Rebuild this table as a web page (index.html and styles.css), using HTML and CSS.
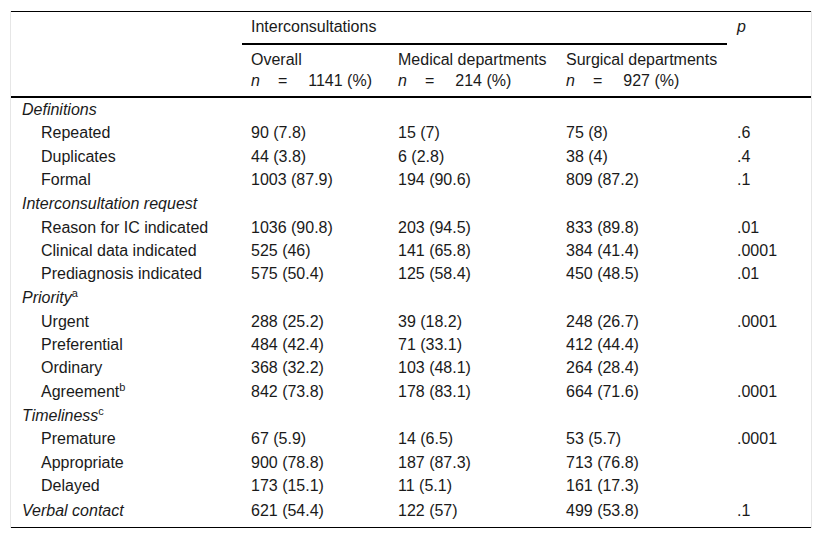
FILE: index.html
```html
<!DOCTYPE html>
<html>
<head>
<meta charset="utf-8">
<link rel="stylesheet" href="styles.css">
</head>
<body>
<div class="frame">
<table class="data">
  <colgroup>
    <col class="c1"><col class="c2"><col class="c3"><col class="c4"><col class="c5">
  </colgroup>
  <thead>
    <tr class="h1">
      <th class="blank" rowspan="2"></th>
      <th class="group" colspan="3">Interconsultations</th>
      <th class="pcol" rowspan="2"><i>p</i></th>
    </tr>
    <tr class="h2">
      <th>Overall<br><i>n</i><span class="eq">=</span>1141 (%)</th>
      <th>Medical departments<br><i>n</i><span class="eq">=</span>214 (%)</th>
      <th>Surgical departments<br><i>n</i><span class="eq">=</span>927 (%)</th>
    </tr>
  </thead>
  <tbody>
    <tr class="cat"><td colspan="5"><i>Definitions</i></td></tr>
    <tr><td class="sub">Repeated</td><td>90 (7.8)</td><td>15 (7)</td><td>75 (8)</td><td class="p">.6</td></tr>
    <tr><td class="sub">Duplicates</td><td>44 (3.8)</td><td>6 (2.8)</td><td>38 (4)</td><td class="p">.4</td></tr>
    <tr><td class="sub">Formal</td><td>1003 (87.9)</td><td>194 (90.6)</td><td>809 (87.2)</td><td class="p">.1</td></tr>
    <tr class="cat"><td colspan="5"><i>Interconsultation request</i></td></tr>
    <tr><td class="sub">Reason for IC indicated</td><td>1036 (90.8)</td><td>203 (94.5)</td><td>833 (89.8)</td><td class="p">.01</td></tr>
    <tr><td class="sub">Clinical data indicated</td><td>525 (46)</td><td>141 (65.8)</td><td>384 (41.4)</td><td class="p">.0001</td></tr>
    <tr><td class="sub">Prediagnosis indicated</td><td>575 (50.4)</td><td>125 (58.4)</td><td>450 (48.5)</td><td class="p">.01</td></tr>
    <tr class="cat"><td colspan="5"><i>Priority</i><sup>a</sup></td></tr>
    <tr><td class="sub">Urgent</td><td>288 (25.2)</td><td>39 (18.2)</td><td>248 (26.7)</td><td class="p">.0001</td></tr>
    <tr><td class="sub">Preferential</td><td>484 (42.4)</td><td>71 (33.1)</td><td>412 (44.4)</td><td class="p"></td></tr>
    <tr><td class="sub">Ordinary</td><td>368 (32.2)</td><td>103 (48.1)</td><td>264 (28.4)</td><td class="p"></td></tr>
    <tr><td class="sub">Agreement<sup>b</sup></td><td>842 (73.8)</td><td>178 (83.1)</td><td>664 (71.6)</td><td class="p">.0001</td></tr>
    <tr class="cat"><td colspan="5"><i>Timeliness</i><sup>c</sup></td></tr>
    <tr><td class="sub">Premature</td><td>67 (5.9)</td><td>14 (6.5)</td><td>53 (5.7)</td><td class="p">.0001</td></tr>
    <tr><td class="sub">Appropriate</td><td>900 (78.8)</td><td>187 (87.3)</td><td>713 (76.8)</td><td class="p"></td></tr>
    <tr><td class="sub">Delayed</td><td>173 (15.1)</td><td>11 (5.1)</td><td>161 (17.3)</td><td class="p"></td></tr>
    <tr class="last"><td class="top"><i>Verbal contact</i></td><td>621 (54.4)</td><td>122 (57)</td><td>499 (53.8)</td><td class="p">.1</td></tr>
  </tbody>
</table>
</div>
</body>
</html>
```
FILE: styles.css
```css
html, body {
  margin: 0;
  padding: 0;
  background: #ffffff;
}

body {
  font-family: "Liberation Sans", Arial, sans-serif;
  font-size: 16px;
  color: #1a1a1a;
}

.frame {
  margin: 11px 0 0 10px;
  width: 800px;
  border-left: 1px solid #e6e6e6;
  border-right: 1px solid #e6e6e6;
}

.data {
  width: 800px;
  border-collapse: collapse;
  table-layout: fixed;
  border-top: 1px solid #000;
  border-bottom: 1px solid #000;
}

.c1 { width: 231px; }
.c2 { width: 147px; }
.c3 { width: 168px; }
.c4 { width: 170px; }
.c5 { width: 84px; }

th {
  font-weight: normal;
  text-align: left;
  vertical-align: top;
  line-height: 18px;
}

.h1 th {
  padding: 6px 9px 7px 9px;
}

.h1 .group {
  border-bottom: 2px solid #000;
}

.h1 .pcol {
  padding-left: 10px;
}

.h2 th {
  padding: 5px 9px 5px 9px;
  line-height: 20.5px;
  border-bottom: 2px solid #000;
}

.h1 .blank, .h1 .pcol {
  border-bottom: 2px solid #000;
}

.eq {
  display: inline-block;
  margin: 0 21px 0 18px;
}

td {
  padding: 2.5px 9px;
  line-height: 18.4px;
  vertical-align: top;
  white-space: nowrap;
}

.cat td {
  padding-left: 11px;
  padding-top: 3px;
}

td.sub {
  padding-left: 30px;
}

td.top {
  padding-left: 11px;
}

td.p {
  padding-left: 10px;
}

.last td {
  padding-top: 4.5px;
  padding-bottom: 6.5px;
}

sup {
  font-size: 11px;
  line-height: 0;
  vertical-align: 6px;
}
```
